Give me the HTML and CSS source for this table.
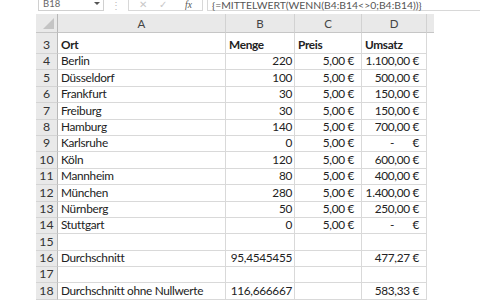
FILE: index.html
```html
<!DOCTYPE html>
<html>
<head>
<meta charset="utf-8">
<link rel="stylesheet" href="styles.css">
</head>
<body>
<div class="fbar">
  <div class="namebox"><span>B18</span><span class="dd"></span></div>
  <div class="dots">⋮</div>
  <div class="btns"><span class="x">✕</span><span class="ok">✓</span><span class="fx">fx</span></div>
  <div class="formula">{=MITTELWERT(WENN(B4:B14&lt;&gt;0;B4:B14))}</div>
</div>
<div class="sheet">
  <div class="hdr corner"><span class="tri"></span></div>
  <div class="hdr">A</div><div class="hdr">B</div><div class="hdr">C</div><div class="hdr">D</div><div class="hdr extra"></div>

  <div class="rn tall">3</div><div class="c tall b">Ort</div><div class="c tall b">Menge</div><div class="c tall b">Preis</div><div class="c tall b">Umsatz</div><div class="gap"></div>
  <div class="rn">4</div><div class="c">Berlin</div><div class="c r">220</div><div class="c e">5,00 €</div><div class="c e">1.100,00 €</div><div class="gap"></div>
  <div class="rn">5</div><div class="c">Düsseldorf</div><div class="c r">100</div><div class="c e">5,00 €</div><div class="c e">500,00 €</div><div class="gap"></div>
  <div class="rn">6</div><div class="c">Frankfurt</div><div class="c r">30</div><div class="c e">5,00 €</div><div class="c e">150,00 €</div><div class="gap"></div>
  <div class="rn">7</div><div class="c">Freiburg</div><div class="c r">30</div><div class="c e">5,00 €</div><div class="c e">150,00 €</div><div class="gap"></div>
  <div class="rn">8</div><div class="c">Hamburg</div><div class="c r">140</div><div class="c e">5,00 €</div><div class="c e">700,00 €</div><div class="gap"></div>
  <div class="rn">9</div><div class="c">Karlsruhe</div><div class="c r">0</div><div class="c e">5,00 €</div><div class="c e dash"><span>-</span><span>€</span></div><div class="gap"></div>
  <div class="rn">10</div><div class="c">Köln</div><div class="c r">120</div><div class="c e">5,00 €</div><div class="c e">600,00 €</div><div class="gap"></div>
  <div class="rn">11</div><div class="c">Mannheim</div><div class="c r">80</div><div class="c e">5,00 €</div><div class="c e">400,00 €</div><div class="gap"></div>
  <div class="rn">12</div><div class="c">München</div><div class="c r">280</div><div class="c e">5,00 €</div><div class="c e">1.400,00 €</div><div class="gap"></div>
  <div class="rn">13</div><div class="c">Nürnberg</div><div class="c r">50</div><div class="c e">5,00 €</div><div class="c e">250,00 €</div><div class="gap"></div>
  <div class="rn">14</div><div class="c">Stuttgart</div><div class="c r">0</div><div class="c e">5,00 €</div><div class="c e dash"><span>-</span><span>€</span></div><div class="gap"></div>
  <div class="rn">15</div><div class="c"></div><div class="c"></div><div class="c"></div><div class="c"></div><div class="gap"></div>
  <div class="rn">16</div><div class="c">Durchschnitt</div><div class="c r">95,4545455</div><div class="c"></div><div class="c e">477,27 €</div><div class="gap"></div>
  <div class="rn">17</div><div class="c"></div><div class="c"></div><div class="c"></div><div class="c"></div><div class="gap"></div>
  <div class="rn">18</div><div class="c">Durchschnitt ohne Nullwerte</div><div class="c r">116,666667</div><div class="c"></div><div class="c e">583,33 €</div><div class="gap"></div>
</div>
</body>
</html>
```

FILE: styles.css
```css
html, body { margin: 0; padding: 0; background: #fff; overflow: hidden; }
body { width: 480px; height: 300px; font-family: Lato, "Liberation Sans", sans-serif; color: #222; }

.fbar { height: 11px; display: flex; align-items: flex-end; font-size: 9.5px; color: #666; overflow: hidden; margin-left: 38px; }
.namebox { width: 66px; height: 11px; border: 1px solid #d0d0d0; border-top: none; box-sizing: border-box; display: flex; align-items: flex-end; justify-content: space-between; padding: 0 3px 1px 4px; line-height: 10px; }
.dd { width: 0; height: 0; border-left: 3px solid transparent; border-right: 3px solid transparent; border-top: 3px solid #555; margin-bottom: 4px; }
.dots { width: 24px; text-align: center; color: #bbb; line-height: 10px; }
.btns { width: 75px; height: 11px; border: 1px solid #d8d8d8; border-top: none; box-sizing: border-box; display: flex; align-items: flex-end; line-height: 10px; color: #c8c8c8; }
.btns .x { margin-left: 10px; }
.btns .ok { margin-left: 12px; }
.btns .fx { margin-left: 18px; color: #555; font-style: italic; font-family: "Liberation Serif", serif; }
.formula { flex: 1; height: 11px; margin-left: 4px; border: 1px solid #d8d8d8; border-top: none; border-right: none; box-sizing: border-box; padding-left: 4px; line-height: 10px; font-size: 10.4px; color: #555; white-space: nowrap; }

.sheet { margin-top: 3px; margin-left: 36px; display: grid; grid-template-columns: 22px 168px 69px 67px 65px 7px; grid-template-rows: 19px 21px repeat(15, 16.4px); font-size: 11.8px; letter-spacing: -0.3px; }
.hdr { background: #e9e9e9; border-bottom: 1px solid #c6c6c6; border-right: 1px solid #d2d2d2; display: flex; align-items: center; justify-content: center; color: #444; font-size: 11.5px; letter-spacing: 0; box-sizing: border-box; }
.hdr.corner { border-right: 1px solid #b8b8b8; position: relative; }
.tri { position: absolute; right: 3px; bottom: 3px; width: 0; height: 0; border-left: 11px solid transparent; border-bottom: 11px solid #c4c4c4; }
.hdr.extra { border-right: none; }
.rn { background: #e9e9e9; border-right: 1px solid #b8b8b8; border-bottom: 1px solid #d4d4d4; display: flex; align-items: flex-end; justify-content: center; color: #333; box-sizing: border-box; padding-bottom: 1px; line-height: 14px; font-size: 12.3px; letter-spacing: 0; }
.c { border-right: 1px solid #d9d9d9; border-bottom: 1px solid #d9d9d9; box-sizing: border-box; display: flex; align-items: flex-end; padding: 0 3px 1px 3px; line-height: 14px; white-space: nowrap; overflow: visible; }
.b { font-weight: bold; }
.r { justify-content: flex-end; padding-right: 2px; }
.e { justify-content: flex-end; padding-right: 7px; }
.dash { justify-content: space-between; padding-left: 28px; }
```
